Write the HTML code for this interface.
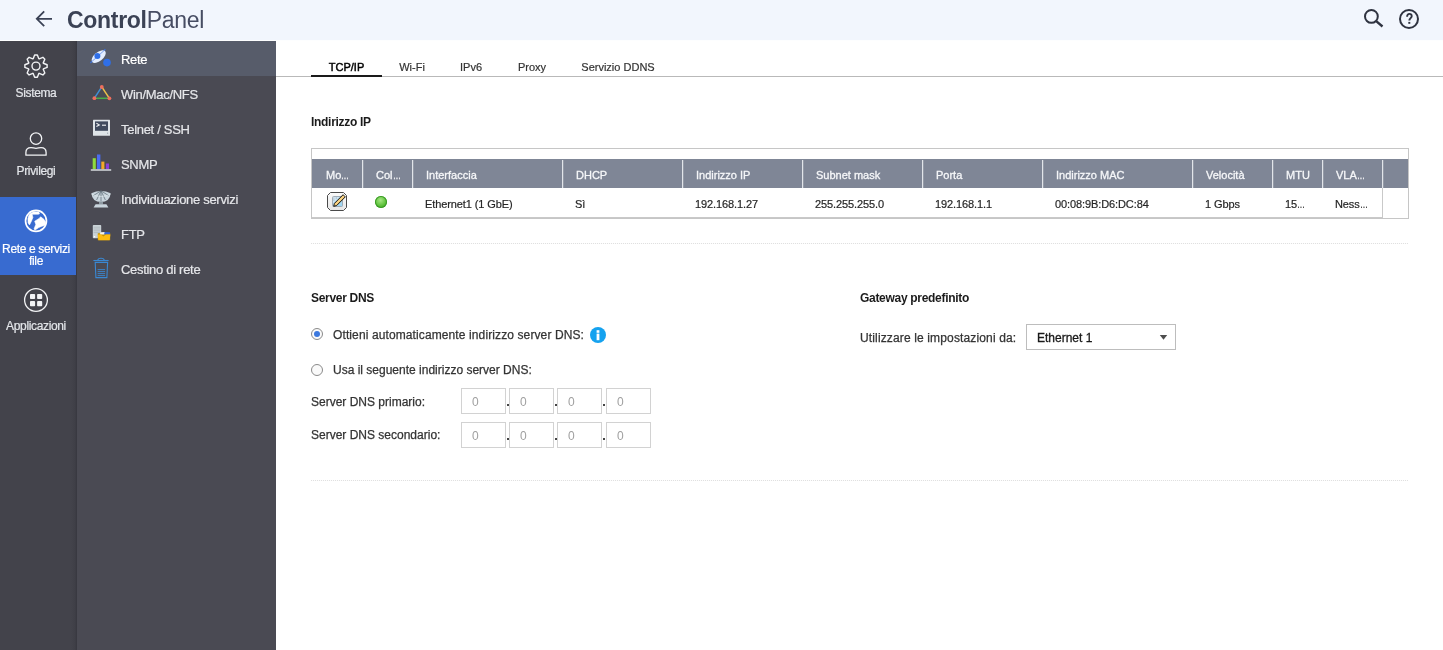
<!DOCTYPE html>
<html><head><meta charset="utf-8">
<style>
*{box-sizing:border-box;margin:0;padding:0}
html,body{width:1443px;height:650px;overflow:hidden;background:#fff;font-family:"Liberation Sans",sans-serif}
.txt,#title,.nl,.sl{will-change:transform}
.abs{position:absolute}
.txt{position:absolute;white-space:nowrap}
#hdr{position:absolute;left:0;top:0;width:1443px;height:41px;background:#f2f6fd;border-bottom:1px solid #fdfeff}
#title{position:absolute;left:66.5px;top:9.2px;font-size:23px;line-height:23px;color:#3b4255;white-space:nowrap;letter-spacing:-0.3px}
#title b{font-weight:700}
#title span{color:#474d63}
#nav{position:absolute;left:0;top:41px;width:77px;height:609px;background:linear-gradient(90deg,#43434b 0,#43434b 71px,#3f3f47 75px,#393941 76.5px,#3d3d45 77px)}
.nl{position:absolute;left:0;width:72px;text-align:center;font-size:12px;line-height:12px;color:#e4e6ea;white-space:nowrap;letter-spacing:-0.35px;-webkit-text-stroke:0.2px}
#sub{position:absolute;left:77px;top:41px;width:199px;height:609px;background:#4a4a53}
.sl{position:absolute;left:121px;font-size:13px;line-height:13px;color:#e6e7ea;white-space:nowrap;letter-spacing:-0.3px;-webkit-text-stroke:0.2px}
.tab{font-size:11px;line-height:11px;text-align:center;color:#333;-webkit-text-stroke:0.2px #333}
.h{font-size:12px;line-height:12px;font-weight:700;color:#1b1b1b;letter-spacing:-0.3px}
.th{font-size:11px;line-height:11px;color:#f6f7f9;-webkit-text-stroke:0.3px #f6f7f9}
.td{font-size:11px;line-height:11px;color:#262626;-webkit-text-stroke:0.2px #262626;letter-spacing:-0.1px}
.r{font-size:12px;line-height:12px;color:#333;-webkit-text-stroke:0.25px #333}
.radio{width:12px;height:12px;border-radius:50%;border:1px solid #8a8a8a;background:#fafafa}
.radio .dot{position:absolute;left:2px;top:2px;width:6px;height:6px;border-radius:50%;background:#3c78de}
.inp{width:45px;height:26px;border:1px solid #d2d2d2;background:#fff}
.zero{font-size:12px;line-height:12px;color:#a0a0a0}
.el{display:inline-block;transform:scaleX(0.72);transform-origin:0 0;letter-spacing:-0.3px}
</style></head><body>
<div id="hdr"></div>
<svg class="abs" style="left:34px;top:9px" width="20" height="20" viewBox="0 0 20 20"><path d="M18 9.8H3.2M10.2 2.4L2.8 9.8L10.2 17.2" fill="none" stroke="#3b4255" stroke-width="1.8"/></svg>
<div id="title"><b>Control</b><span>Panel</span></div>
<svg class="abs" style="left:1362px;top:7px" width="24" height="24" viewBox="0 0 24 24"><circle cx="9.4" cy="9.4" r="6.4" fill="none" stroke="#2f3340" stroke-width="2"/><path d="M14.2 14.2L20.5 19.5" stroke="#2f3340" stroke-width="2.4"/></svg>
<svg class="abs" style="left:1397px;top:7px" width="24" height="24" viewBox="0 0 24 24"><circle cx="12" cy="12" r="9" fill="none" stroke="#2f3340" stroke-width="2"/><path d="M10.1 9.7C10.1 7.9 11.1 6.9 12.4 6.9C13.7 6.9 14.7 7.9 14.7 9.2C14.7 11 12.3 11.3 12.3 13.6" fill="none" stroke="#2f3340" stroke-width="1.9"/><rect x="11.3" y="14.9" width="2" height="1.9" fill="#2f3340"/></svg>
<div id="nav"></div>
<div class="abs" style="left:0;top:197px;width:76px;height:78px;background:#386bd0"></div>
<svg class="abs" style="left:0;top:41px" width="77" height="312" viewBox="0 41 77 312"><path d="M33.17 58.72L34.64 54.98L37.36 54.98L38.83 58.72A7.9 7.9 0 0 1 39.21 58.88L42.90 57.27L44.83 59.20L43.22 62.89A7.9 7.9 0 0 1 43.38 63.27L47.12 64.74L47.12 67.46L43.38 68.93A7.9 7.9 0 0 1 43.22 69.31L44.83 73.00L42.90 74.93L39.21 73.32A7.9 7.9 0 0 1 38.83 73.48L37.36 77.22L34.64 77.22L33.17 73.48A7.9 7.9 0 0 1 32.79 73.32L29.10 74.93L27.17 73.00L28.78 69.31A7.9 7.9 0 0 1 28.62 68.93L24.88 67.46L24.88 64.74L28.62 63.27A7.9 7.9 0 0 1 28.78 62.89L27.17 59.20L29.10 57.27L32.79 58.88A7.9 7.9 0 0 1 33.17 58.72Z" fill="none" stroke="#f2f3f5" stroke-width="1.4" stroke-linejoin="round"/><circle cx="36" cy="66.1" r="4" fill="none" stroke="#f2f3f5" stroke-width="1.4"/><circle cx="36" cy="138.6" r="5.7" fill="none" stroke="#f2f3f5" stroke-width="1.3"/><path d="M25.9 155.2V152.5C25.9 149.5 28 147.6 31 147.6C33 147.6 33.8 148.4 36 148.4C38.2 148.4 39 147.6 41 147.6C44 147.6 46.1 149.5 46.1 152.5V155.2Z" fill="none" stroke="#f2f3f5" stroke-width="1.3" stroke-linejoin="round"/><circle cx="36" cy="220.9" r="10.45" fill="none" stroke="#fff" stroke-width="1.7"/><path d="M29.9 213.8L33.6 211.8L38.8 212L39.5 213.8L38.4 214.2L32.1 214.2L32.9 217.5L31.4 221.2L29.5 224.9L28.1 223L27.9 218.6L28.8 215.6Z" fill="#fff" stroke="#fff" stroke-width="0.6" stroke-linejoin="round"/><path d="M34.7 221.2L39.5 218.2L40.6 216.8L43.9 219.3L45.8 222.3L45 225.2L41.4 226.4L38.8 227.5L35.1 230L34 229L35.8 224.5Z" fill="#fff" stroke="#fff" stroke-width="0.6" stroke-linejoin="round"/><circle cx="36" cy="300" r="11.4" fill="none" stroke="#f2f3f5" stroke-width="1.3"/><rect x="30" y="294" width="5.1" height="5.1" rx="0.8" fill="#f2f3f5"/><rect x="37.1" y="294" width="5.1" height="5.1" rx="0.8" fill="#f2f3f5"/><rect x="30" y="301.1" width="5.1" height="5.1" rx="0.8" fill="#f2f3f5"/><rect x="37.1" y="301.1" width="5.1" height="5.1" rx="0.8" fill="#f2f3f5"/></svg>
<div class="nl" style="top:87px">Sistema</div>
<div class="nl" style="top:165px">Privilegi</div>
<div class="nl" style="top:243.2px;color:#fff">Rete e servizi</div>
<div class="nl" style="top:254.8px;color:#fff">file</div>
<div class="nl" style="top:320.3px">Applicazioni</div>
<div id="sub"></div>
<div class="abs" style="left:77px;top:41px;width:199px;height:35px;background:#575c6a"></div>
<div class="sl" style="top:52.8px;color:#fff">Rete</div>
<div class="sl" style="top:87.8px">Win/Mac/NFS</div>
<div class="sl" style="top:122.8px">Telnet / SSH</div>
<div class="sl" style="top:157.8px">SNMP</div>
<div class="sl" style="top:192.8px">Individuazione servizi</div>
<div class="sl" style="top:227.8px">FTP</div>
<div class="sl" style="top:262.8px">Cestino di rete</div>
<svg class="abs" style="left:85px;top:41px" width="30" height="245" viewBox="85 41 30 245"><path d="M90.3 63L105.4 49.2" stroke="#3b74e6" stroke-width="1.2" opacity="0.85"/><ellipse cx="98.7" cy="56.6" rx="8.4" ry="4.4" transform="rotate(-39 98.7 56.6)" fill="#e4eeff"/><path d="M91.8 61.6L104.2 50.4" stroke="#3b74e6" stroke-width="0.9" opacity="0.7"/><circle cx="97.4" cy="56" r="3" fill="#2f6fe8"/><circle cx="107" cy="62.6" r="3.8" fill="#2f6fe8"/><path d="M101.8 86.8L94.4 98.2" stroke="#3e8fd6" stroke-width="1.5"/><path d="M101.8 86.8L109.4 98.4" stroke="#efc24a" stroke-width="1.5"/><path d="M94.4 98.3L109.4 98.3" stroke="#4aae4a" stroke-width="1.5"/><circle cx="101.8" cy="87" r="1.9" fill="#ef6f5e"/><circle cx="94.4" cy="98.2" r="1.9" fill="#ef6f5e"/><circle cx="109.4" cy="98.3" r="1.9" fill="#ef6f5e"/><rect x="93" y="119.8" width="17" height="16" rx="0.5" fill="#dfe4e8"/><rect x="95" y="121.4" width="13" height="9.4" fill="#404a5e"/><path d="M96.4 123.3L99.3 124.9L96.4 126.5" fill="none" stroke="#f4f6f8" stroke-width="1.05"/><path d="M102 125.2H106" stroke="#f4f6f8" stroke-width="1.1"/><circle cx="107.6" cy="133.2" r="0.6" fill="#9aa3ab"/><rect x="92.7" y="158.2" width="3.1" height="11" fill="#8edc3c"/><rect x="97" y="154.5" width="3.4" height="14.7" fill="#4a6cf0"/><rect x="101.3" y="161.6" width="3.1" height="7.6" fill="#f4a92a"/><rect x="105.9" y="163.5" width="3.1" height="5.7" fill="#8a3fd8"/><rect x="90.8" y="169.2" width="20.4" height="1.6" fill="#cfd3d6"/><path d="M91.3 193.2Q101 188.6 110.7 193.2Q109.8 201.9 101 202.1Q92.2 201.9 91.3 193.2Z" fill="#c9d5dd"/><path d="M101 190.8L93.4 195.6M101 190.8L96.6 200M101 190.8V201.6M101 190.8L105.4 200M101 190.8L108.6 195.6" stroke="#5f6c76" stroke-width="0.75"/><path d="M91.6 194.4Q101 198.6 110.4 194.4" fill="none" stroke="#e4ecf0" stroke-width="0.6"/><rect x="99" y="201.8" width="4" height="2.6" fill="#8d99a1"/><path d="M95.6 204.2H106.4L108.4 207.4H93.6Z" fill="#c9d5dd"/><rect x="92.8" y="225" width="8.4" height="13.2" rx="0.8" fill="#cad3d7"/><path d="M93.6 227.2H100.4M93.6 229H100.4M93.6 230.8H100.4M93.6 232.6H100.4" stroke="#a9b3b8" stroke-width="0.7"/><rect x="93.8" y="236" width="1.4" height="1.4" fill="#fff"/><path d="M97.8 233.2H110.2V240.2H97.8Z" fill="#c89400"/><path d="M99.8 234.6L100.6 232.2L105 232L104.6 234.6Z" fill="#f4f4ee"/><path d="M104.2 234.6L104.6 232L110 232.2L110 234.6Z" fill="#3465d8"/><path d="M97.8 234.4H101L103.4 236.6L105.8 234.4H110.4L109.6 240.2H98.4Z" fill="#fdbd12"/><path d="M93.4 260.5H108.6" stroke="#3a88d2" stroke-width="1.1"/><path d="M97.8 260.2C97.8 258.6 98.5 258.2 101 258.2C103.5 258.2 104.2 258.6 104.2 260.2" fill="none" stroke="#3a88d2" stroke-width="1.1"/><path d="M95.2 262.4L95.9 277.6H106.9L107.6 262.4Z" fill="none" stroke="#3a88d2" stroke-width="1.1"/><path d="M97.6 269.6H105.1M97.6 271.6H105.1M97.6 273.6H105.1M97.6 275.6H105.1" stroke="#3a88d2" stroke-width="0.9"/></svg>
<div class="abs" style="left:276px;top:76px;width:1167px;height:1px;background:#b9b9b9"></div>
<div class="abs" style="left:311px;top:75px;width:71px;height:2px;background:#1a1a1a"></div>
<div class="txt tab" style="left:311px;width:71px;top:62px;color:#000;-webkit-text-stroke:0.45px #000">TCP/IP</div>
<div class="txt tab" style="left:382px;width:60px;top:62px">Wi-Fi</div>
<div class="txt tab" style="left:442px;width:58px;top:62px">IPv6</div>
<div class="txt tab" style="left:500px;width:64px;top:62px">Proxy</div>
<div class="txt tab" style="left:564px;width:108px;top:62px">Servizio DDNS</div>
<div class="txt h" style="left:311px;top:116px">Indirizzo IP</div>
<div class="abs" style="left:311px;top:148px;width:1098px;height:71px;border:1px solid #c6c6c6"></div>
<div class="abs" style="left:312px;top:159px;width:1096px;height:29px;background:#7f8696"></div>
<div class="abs" style="left:1382px;top:188px;width:1px;height:30px;background:#c9c9c9"></div>
<div class="abs" style="left:312px;top:217px;width:1070px;height:1px;background:#c9c9c9"></div>
<div class="abs" style="left:362px;top:160px;width:1px;height:28px;background:#e2e5ea"></div><div class="abs" style="left:363px;top:160px;width:1px;height:28px;background:#959ba7"></div>
<div class="abs" style="left:412px;top:160px;width:1px;height:28px;background:#e2e5ea"></div><div class="abs" style="left:413px;top:160px;width:1px;height:28px;background:#959ba7"></div>
<div class="abs" style="left:562px;top:160px;width:1px;height:28px;background:#e2e5ea"></div><div class="abs" style="left:563px;top:160px;width:1px;height:28px;background:#959ba7"></div>
<div class="abs" style="left:682px;top:160px;width:1px;height:28px;background:#e2e5ea"></div><div class="abs" style="left:683px;top:160px;width:1px;height:28px;background:#959ba7"></div>
<div class="abs" style="left:802px;top:160px;width:1px;height:28px;background:#e2e5ea"></div><div class="abs" style="left:803px;top:160px;width:1px;height:28px;background:#959ba7"></div>
<div class="abs" style="left:922px;top:160px;width:1px;height:28px;background:#e2e5ea"></div><div class="abs" style="left:923px;top:160px;width:1px;height:28px;background:#959ba7"></div>
<div class="abs" style="left:1042px;top:160px;width:1px;height:28px;background:#e2e5ea"></div><div class="abs" style="left:1043px;top:160px;width:1px;height:28px;background:#959ba7"></div>
<div class="abs" style="left:1192px;top:160px;width:1px;height:28px;background:#e2e5ea"></div><div class="abs" style="left:1193px;top:160px;width:1px;height:28px;background:#959ba7"></div>
<div class="abs" style="left:1272px;top:160px;width:1px;height:28px;background:#e2e5ea"></div><div class="abs" style="left:1273px;top:160px;width:1px;height:28px;background:#959ba7"></div>
<div class="abs" style="left:1322px;top:160px;width:1px;height:28px;background:#e2e5ea"></div><div class="abs" style="left:1323px;top:160px;width:1px;height:28px;background:#959ba7"></div>
<div class="abs" style="left:1382px;top:160px;width:1px;height:28px;background:#e2e5ea"></div><div class="abs" style="left:1383px;top:160px;width:1px;height:28px;background:#959ba7"></div>
<div class="txt th" style="left:326px;top:169.7px">Mo<span class="el">…</span></div>
<div class="txt th" style="left:376px;top:169.7px">Col<span class="el">…</span></div>
<div class="txt th" style="left:426px;top:169.7px">Interfaccia</div>
<div class="txt td" style="left:425px;top:198.5px">Ethernet1 (1 GbE)</div>
<div class="txt th" style="left:576px;top:169.7px">DHCP</div>
<div class="txt td" style="left:575px;top:198.5px">Sì</div>
<div class="txt th" style="left:696px;top:169.7px">Indirizzo IP</div>
<div class="txt td" style="left:695px;top:198.5px">192.168.1.27</div>
<div class="txt th" style="left:816px;top:169.7px">Subnet mask</div>
<div class="txt td" style="left:815px;top:198.5px">255.255.255.0</div>
<div class="txt th" style="left:936px;top:169.7px">Porta</div>
<div class="txt td" style="left:935px;top:198.5px">192.168.1.1</div>
<div class="txt th" style="left:1056px;top:169.7px">Indirizzo MAC</div>
<div class="txt td" style="left:1055px;top:198.5px">00:08:9B:D6:DC:84</div>
<div class="txt th" style="left:1206px;top:169.7px">Velocità</div>
<div class="txt td" style="left:1205px;top:198.5px">1 Gbps</div>
<div class="txt th" style="left:1286px;top:169.7px">MTU</div>
<div class="txt td" style="left:1285px;top:198.5px">15<span class="el">…</span></div>
<div class="txt th" style="left:1336px;top:169.7px">VLA<span class="el">…</span></div>
<div class="txt td" style="left:1335px;top:198.5px">Ness<span class="el">…</span></div>
<svg class="abs" style="left:326px;top:191px" width="22" height="21" viewBox="326 191 22 21"><defs><linearGradient id="bg" x1="0" y1="0" x2="0" y2="1"><stop offset="0" stop-color="#fbfbfb"/><stop offset="1" stop-color="#e6e6e6"/></linearGradient><linearGradient id="pg" x1="0" y1="0" x2="1" y2="1"><stop offset="0" stop-color="#e9f1f8"/><stop offset="1" stop-color="#8fd0f0"/></linearGradient></defs><path d="M330.5 192.5H343.5L346.5 195.5V207.5L343.5 210.5H330.5L327.5 207.5V195.5Z" fill="url(#bg)" stroke="#4a4a4a" stroke-width="1"/><rect x="332.5" y="196.5" width="10" height="10" rx="1" fill="url(#pg)" stroke="#98a4ae" stroke-width="0.9"/><path d="M333.5 198H334.3M335.8 198H336.6M333.5 200H334.3" stroke="#6a7888" stroke-width="0.8"/><path d="M336.6 205.6L345.3 196.9L343.1 194.7L334.4 203.4L333.7 206.3Z" fill="#f4c870" stroke="#111" stroke-width="1" stroke-linejoin="round"/><path d="M335.2 204.6L344.1 195.7" stroke="#fbe3a8" stroke-width="0.7"/></svg>
<div class="abs" style="left:375px;top:196px;width:12px;height:12px;border-radius:50%;background:radial-gradient(circle at 45% 35%,#a6e684 0%,#5cc13a 55%,#2f9a1d 100%);box-shadow:inset 0 0 0 1px #3a9a26"></div>
<div class="abs" style="left:311px;top:243px;width:1097px;height:1px;background:repeating-linear-gradient(90deg,#e0e0e0 0 1px,#fcfcfc 1px 2px)"></div>
<div class="txt h" style="left:311px;top:291.5px">Server DNS</div>
<div class="abs radio" style="left:311px;top:328px"><div class="dot"></div></div>
<div class="txt r" style="left:333px;top:328.7px;letter-spacing:0.11px">Ottieni automaticamente indirizzo server DNS:</div>
<svg class="abs" style="left:590px;top:327px" width="16" height="16" viewBox="0 0 16 16"><circle cx="8" cy="8" r="8" fill="#15a2ef"/><rect x="6.6" y="3.2" width="2.8" height="2.6" fill="#fff"/><rect x="6.6" y="6.6" width="2.8" height="6.6" fill="#fff"/></svg>
<div class="abs radio" style="left:311px;top:364px"></div>
<div class="txt r" style="left:333px;top:363.8px">Usa il seguente indirizzo server DNS:</div>
<div class="txt r" style="left:311px;top:395.5px">Server DNS primario:</div>
<div class="txt r" style="left:311px;top:429.3px">Server DNS secondario:</div>
<div class="abs inp" style="left:461px;top:388px"></div><div class="txt zero" style="left:472px;top:395.5px">0</div>
<div class="abs" style="left:507px;top:404px;width:1.5px;height:1.5px;background:#444"></div>
<div class="abs inp" style="left:509px;top:388px"></div><div class="txt zero" style="left:520px;top:395.5px">0</div>
<div class="abs" style="left:555px;top:404px;width:1.5px;height:1.5px;background:#444"></div>
<div class="abs inp" style="left:557px;top:388px"></div><div class="txt zero" style="left:568px;top:395.5px">0</div>
<div class="abs" style="left:603px;top:404px;width:1.5px;height:1.5px;background:#444"></div>
<div class="abs inp" style="left:606px;top:388px"></div><div class="txt zero" style="left:617px;top:395.5px">0</div>
<div class="abs inp" style="left:461px;top:422px"></div><div class="txt zero" style="left:472px;top:429.5px">0</div>
<div class="abs" style="left:507px;top:438px;width:1.5px;height:1.5px;background:#444"></div>
<div class="abs inp" style="left:509px;top:422px"></div><div class="txt zero" style="left:520px;top:429.5px">0</div>
<div class="abs" style="left:555px;top:438px;width:1.5px;height:1.5px;background:#444"></div>
<div class="abs inp" style="left:557px;top:422px"></div><div class="txt zero" style="left:568px;top:429.5px">0</div>
<div class="abs" style="left:603px;top:438px;width:1.5px;height:1.5px;background:#444"></div>
<div class="abs inp" style="left:606px;top:422px"></div><div class="txt zero" style="left:617px;top:429.5px">0</div>
<div class="txt h" style="left:860px;top:291.6px">Gateway predefinito</div>
<div class="txt r" style="left:860px;top:331.7px;letter-spacing:0.14px">Utilizzare le impostazioni da:</div>
<div class="abs" style="left:1026px;top:324px;width:150px;height:26px;border:1px solid #bdbdbd;background:#fff"></div>
<div class="txt r" style="left:1037px;top:332px;color:#1a1a1a;-webkit-text-stroke:0.3px #1a1a1a">Ethernet 1</div>
<svg class="abs" style="left:1159px;top:334px" width="9" height="6" viewBox="0 0 9 6"><path d="M0.8 0.9H8.2L4.5 5.7Z" fill="#4d4d4d"/></svg>
<div class="abs" style="left:311px;top:480px;width:1097px;height:1px;background:repeating-linear-gradient(90deg,#e0e0e0 0 1px,#fcfcfc 1px 2px)"></div>
</body></html>
